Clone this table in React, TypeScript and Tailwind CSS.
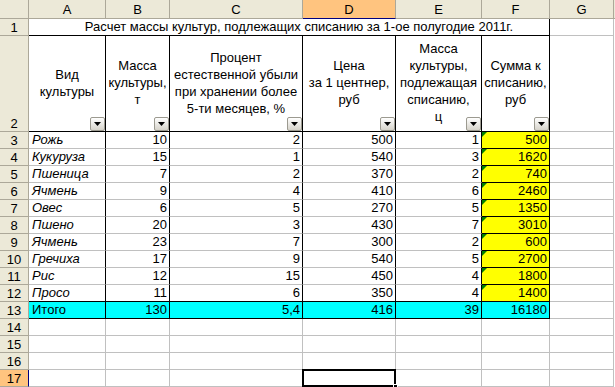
import React from "react";

type Row = {
  name: string;
  mass: string;
  pct: string;
  price: string;
  wmass: string;
  sum: string;
};

const rows: Row[] = [
  { name: "Рожь", mass: "10", pct: "2", price: "500", wmass: "1", sum: "500" },
  { name: "Кукуруза", mass: "15", pct: "1", price: "540", wmass: "3", sum: "1620" },
  { name: "Пшеница", mass: "7", pct: "2", price: "370", wmass: "2", sum: "740" },
  { name: "Ячмень", mass: "9", pct: "4", price: "410", wmass: "6", sum: "2460" },
  { name: "Овес", mass: "6", pct: "5", price: "270", wmass: "5", sum: "1350" },
  { name: "Пшено", mass: "20", pct: "3", price: "430", wmass: "7", sum: "3010" },
  { name: "Ячмень", mass: "23", pct: "7", price: "300", wmass: "2", sum: "600" },
  { name: "Гречиха", mass: "17", pct: "9", price: "540", wmass: "5", sum: "2700" },
  { name: "Рис", mass: "12", pct: "15", price: "450", wmass: "4", sum: "1800" },
  { name: "Просо", mass: "11", pct: "6", price: "350", wmass: "4", sum: "1400" },
];

const letters = ["A", "B", "C", "D", "E", "F", "G"];

const hdr = "bg-[#ece9d8] border-r border-b border-[#aca899] flex items-center justify-center text-[13px] leading-none";

const DropBtn = () => (
  <div className="absolute right-0 bottom-0 w-[15px] h-[14px] rounded-[2px] border border-[#9c9a90] bg-gradient-to-b from-[#ffffff] to-[#d6d3ca] flex items-center justify-center">
    <svg width="7" height="4" viewBox="0 0 7 4">
      <path d="M0 0H7L3.5 4Z" fill="#000" />
    </svg>
  </div>
);

const HeadCell = ({ lines }: { lines: string[] }) => (
  <div className="relative border-r border-b border-black flex flex-col items-center justify-center text-center leading-[17px] pb-[2px]">
    {lines.map((l, i) => (
      <span key={i} className="whitespace-nowrap">{l}</span>
    ))}
    <DropBtn />
  </div>
);

const Num = ({ v, bottomBlack }: { v: string; bottomBlack: boolean }) => (
  <div
    className={
      "border-r border-black border-b text-right pr-[2px] leading-[16px] " +
      (bottomBlack ? "border-b-black" : "border-b-[#c0c0c0]")
    }
  >
    {v}
  </div>
);

const Blank = () => <div className="border-r border-b border-[#c0c0c0]" />;

export default function App() {
  return (
    <div className="w-[615px] h-[387px] overflow-hidden bg-white text-black font-['Liberation_Sans',Arial,sans-serif] text-[13px]">
      <div className="grid grid-cols-[29px_77px_64px_133px_93px_86px_68px_64px_1fr] grid-rows-[19px_17px_96px_repeat(15,17px)]">
        {/* column headers */}
        <div className={hdr} />
        {letters.map((l) => (
          <div
            key={l}
            className={
              l === "D"
                ? "bg-[#ffc47f] border-r border-b border-r-[#aca899] border-b-[#000080] flex items-center justify-center text-[13px] leading-none"
                : hdr
            }
          >
            {l}
          </div>
        ))}
        <div className="bg-[#ece9d8] border-b border-[#aca899]" />

        {/* row 1 */}
        <div className={hdr}>1</div>
        <div className="col-span-6 border-r border-b border-black text-center pl-[20px] leading-[16px] whitespace-nowrap">
          Расчет массы культур, подлежащих списанию за 1-ое полугодие 2011г.
        </div>
        <Blank />
        <div />

        {/* row 2 */}
        <div className={hdr + " !items-end pb-[1px]"}>2</div>
        <HeadCell lines={["Вид", "культуры"]} />
        <HeadCell lines={["Масса", "культуры,", "т"]} />
        <HeadCell lines={["Процент", "естественной убыли", "при хранении более", "5-ти месяцев, %"]} />
        <HeadCell lines={["Цена", "за 1 центнер,", "руб"]} />
        <HeadCell lines={["Масса", "культуры,", "подлежащая", "списанию,", "ц"]} />
        <HeadCell lines={["Сумма к", "списанию,", "руб"]} />
        <Blank />
        <div />

        {/* data rows */}
        {rows.map((r, i) => {
          const last = i === rows.length - 1;
          return (
            <React.Fragment key={i}>
              <div className={hdr}>{i + 3}</div>
              <div
                className={
                  "border-r border-black border-b pl-[3px] italic leading-[16px] " +
                  (last ? "border-b-black" : "border-b-[#c0c0c0]")
                }
              >
                {r.name}
              </div>
              <Num v={r.mass} bottomBlack={last} />
              <Num v={r.pct} bottomBlack={last} />
              <Num v={r.price} bottomBlack={last} />
              <Num v={r.wmass} bottomBlack={last} />
              <div className="relative bg-[#ffff00] border-r border-b border-black text-right pr-[2px] leading-[16px]">
                <svg className="absolute left-0 top-0" width="5" height="5" viewBox="0 0 5 5">
                  <path d="M0 0H5L0 5Z" fill="#008000" />
                </svg>
                {r.sum}
              </div>
              <Blank />
              <div />
            </React.Fragment>
          );
        })}

        {/* total row */}
        <div className={hdr}>13</div>
        <div className="bg-[#00ffff] border-r border-b border-black pl-[3px] leading-[16px]">Итого</div>
        {["130", "5,4", "416", "39", "16180"].map((v, i) => (
          <div key={i} className="bg-[#00ffff] border-r border-b border-black text-right pr-[2px] leading-[16px]">
            {v}
          </div>
        ))}
        <Blank />
        <div />

        {/* empty rows */}
        {[14, 15, 16, 17].map((n) => (
          <React.Fragment key={n}>
            <div
              className={
                n === 17
                  ? "bg-[#ffc47f] border-r border-b border-r-[#000080] border-b-[#aca899] flex items-center justify-center text-[13px] leading-none"
                  : hdr
              }
            >
              {n}
            </div>
            {letters.map((l) =>
              n === 17 && l === "D" ? (
                <div key={l} className="relative border-r border-b border-[#c0c0c0]">
                  <div className="absolute -left-[1px] -top-[1px] -right-[1px] bottom-[-1px] border-2 border-black" />
                  <div className="absolute -right-[3px] -bottom-[3px] w-[5px] h-[5px] bg-black border border-white" />
                </div>
              ) : (
                <Blank key={l} />
              )
            )}
            <div />
          </React.Fragment>
        ))}
      </div>
    </div>
  );
}
